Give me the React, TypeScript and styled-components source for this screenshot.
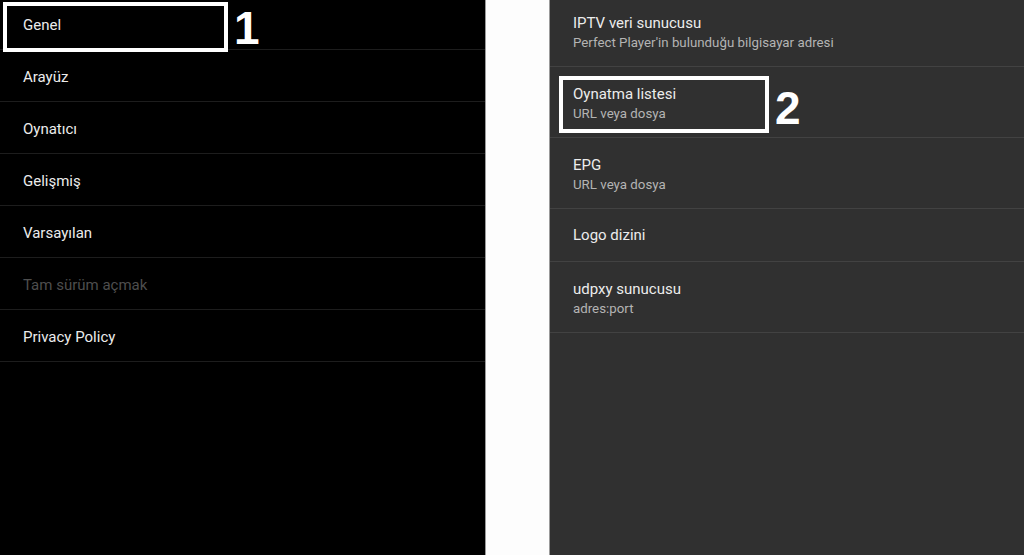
import * as React from "react";
import styled, { createGlobalStyle } from "styled-components";

const GlobalStyle = createGlobalStyle`
  html, body {
    margin: 0;
    padding: 0;
    background: #ffffff;
  }
  * {
    box-sizing: border-box;
  }
`;

const Page = styled.div`
  display: flex;
  width: 1024px;
  height: 555px;
  overflow: hidden;
  background: #ffffff;
  font-family: Roboto, "Noto Sans", Arial, sans-serif;
`;

const Panel = styled.div<{ $bg: string; $width?: number }>`
  flex: ${(p) => (p.$width ? `0 0 ${p.$width}px` : "1 1 auto")};
  background: ${(p) => p.$bg};
  overflow: hidden;
`;

const Spacer = styled.div`
  flex: 0 0 65px;
  background: #fdfdfd;
  border-left: 1px solid #9a9a9a;
  border-right: 1px solid #9a9a9a;
`;

const List = styled.div<{ $shift: number }>`
  display: flex;
  flex-direction: column;
  margin-top: ${(p) => -p.$shift}px;
`;

const MenuRow = styled.div<{ $disabled?: boolean }>`
  position: relative;
  display: flex;
  align-items: center;
  height: 52px;
  padding: 2px 0 0 23px;
  border-bottom: 1px solid #1d1d1d;
  font-size: 15px;
  color: ${(p) => (p.$disabled ? "#4e4e4e" : "#ececec")};
`;

const SettingRow = styled.div<{ $tall: boolean }>`
  position: relative;
  display: flex;
  flex-direction: column;
  justify-content: ${(p) => (p.$tall ? "flex-start" : "center")};
  height: ${(p) => (p.$tall ? 71 : 53)}px;
  padding: ${(p) => (p.$tall ? 17 : 0)}px 0 0 23px;
  border-bottom: 1px solid #424242;
`;

const Title = styled.div`
  font-size: 15px;
  line-height: 20px;
  color: #ececec;
`;

const Subtitle = styled.div`
  font-size: 13.3px;
  line-height: 19px;
  color: #b4b4b4;
`;

const Marker = styled.div<{ $top: number; $left: number }>`
  position: absolute;
  top: ${(p) => p.$top}px;
  left: ${(p) => p.$left}px;
  display: flex;
  align-items: flex-start;
  gap: 6px;
`;

const Frame = styled.div<{ $w: number; $h: number }>`
  width: ${(p) => p.$w}px;
  height: ${(p) => p.$h}px;
  border: 4px solid #ffffff;
`;

const Number = styled.span<{ $nudge: number }>`
  margin-top: ${(p) => p.$nudge}px;
  font-family: "Liberation Sans", Arial, sans-serif;
  font-weight: 700;
  font-size: 46px;
  line-height: normal;
  color: #ffffff;
`;

const menu = [
  "Genel",
  "Arayüz",
  "Oynatıcı",
  "Gelişmiş",
  "Varsayılan",
  "Tam sürüm açmak",
  "Privacy Policy",
];

const settings = [
  { title: "IPTV veri sunucusu", sub: "Perfect Player'in bulunduğu bilgisayar adresi" },
  { title: "Oynatma listesi", sub: "URL veya dosya" },
  { title: "EPG", sub: "URL veya dosya" },
  { title: "Logo dizini" },
  { title: "udpxy sunucusu", sub: "adres:port" },
];

export default function App() {
  return (
    <>
      <GlobalStyle />
      <Page>
        <Panel $bg="#000000" $width={485}>
          <List $shift={2}>
            {menu.map((item, i) => (
              <MenuRow key={item} $disabled={item === "Tam sürüm açmak"}>
                {item}
                {i === 0 && (
                  <Marker $top={4} $left={3}>
                    <Frame $w={225} $h={50} />
                    <Number $nudge={-1}>1</Number>
                  </Marker>
                )}
              </MenuRow>
            ))}
          </List>
        </Panel>
        <Spacer />
        <Panel $bg="#303030">
          <List $shift={4}>
            {settings.map((s, i) => (
              <SettingRow key={s.title} $tall={!!s.sub}>
                <Title>{s.title}</Title>
                {s.sub && <Subtitle>{s.sub}</Subtitle>}
                {i === 1 && (
                  <Marker $top={9} $left={9}>
                    <Frame $w={210} $h={57} />
                    <Number $nudge={5}>2</Number>
                  </Marker>
                )}
              </SettingRow>
            ))}
          </List>
        </Panel>
      </Page>
    </>
  );
}
